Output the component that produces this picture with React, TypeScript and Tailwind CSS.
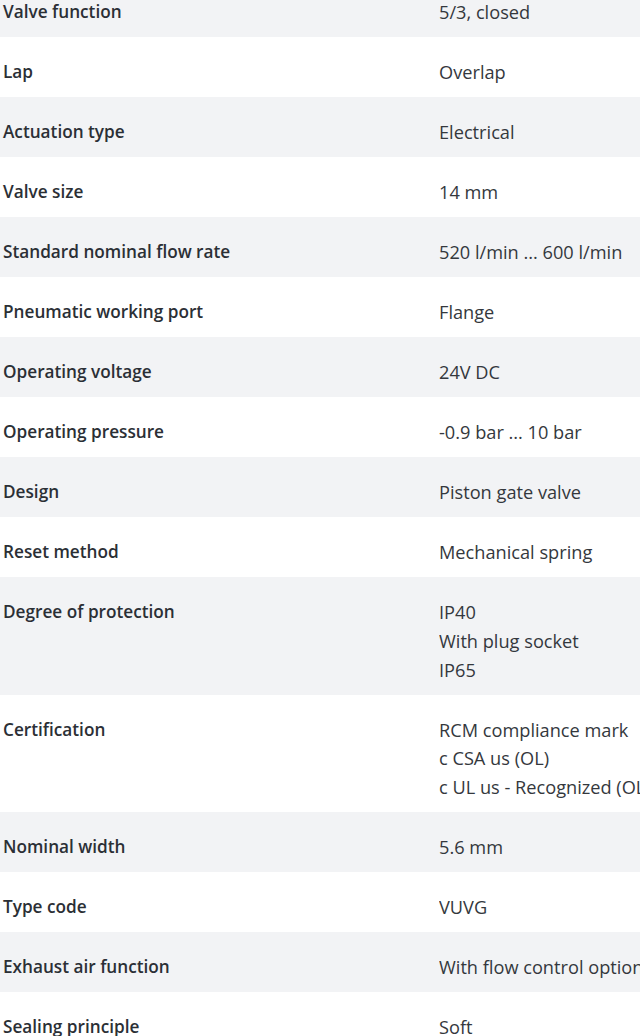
import React from "react";

const rows: [string, string[]][] = [
  ["Valve function", ["5/3, closed"]],
  ["Lap", ["Overlap"]],
  ["Actuation type", ["Electrical"]],
  ["Valve size", ["14 mm"]],
  ["Standard nominal flow rate", ["520 l/min ... 600 l/min"]],
  ["Pneumatic working port", ["Flange"]],
  ["Operating voltage", ["24V DC"]],
  ["Operating pressure", ["-0.9 bar ... 10 bar"]],
  ["Design", ["Piston gate valve"]],
  ["Reset method", ["Mechanical spring"]],
  ["Degree of protection", ["IP40", "With plug socket", "IP65"]],
  ["Certification", ["RCM compliance mark", "c CSA us (OL)", "c UL us - Recognized (OL)"]],
  ["Nominal width", ["5.6 mm"]],
  ["Type code", ["VUVG"]],
  ["Exhaust air function", ["With flow control option"]],
  ["Sealing principle", ["Soft"]],
];

export default function App() {
  return (
    <div
      className="w-[640px] h-[1036px] overflow-hidden bg-white leading-[28.75px] text-[#34383d]"
      style={{ fontFamily: '"Open Sans", "Noto Sans", sans-serif' }}
    >
      <div className="-mt-[23px] flex flex-col">
        {rows.map(([label, values], i) => (
          <div
            key={label}
            className={`grid grid-cols-[439px_1fr] pt-[21px] pb-[10.25px] ${i % 2 === 0 ? "bg-[#f2f3f5]" : "bg-white"}`}
          >
            <div className="pl-[3px] text-[17.2px] font-semibold text-[#2b2f35] whitespace-nowrap">{label}</div>
            <div className="flex flex-col text-[18.2px] whitespace-nowrap overflow-hidden">
              {values.map((v) => (
                <span key={v}>{v}</span>
              ))}
            </div>
          </div>
        ))}
      </div>
    </div>
  );
}
